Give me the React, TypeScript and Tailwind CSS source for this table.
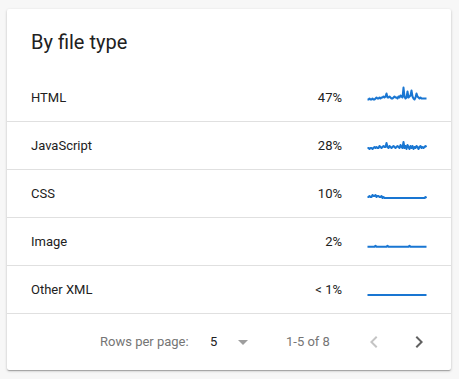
import * as React from "react";

type Row = { label: string; pct: string; base: number; pts: number[] };

// heights above baseline, one per px step across a 60px wide sparkline
const html = [0,0,1,0,0,1,0,0,1,2,1,1,2,1,2,2,3,2,3,6,2,2,3,2,1,1,2,3,2,2,1,3,2,4,3,2,12,3,1,2,8,2,3,4,9,3,1,0,2,6,3,2,1,2,1,1,1,1,1,1];
const js = [1,1,0,1,1,0,1,2,1,2,1,1,3,2,1,2,3,2,2,6,2,1,3,2,1,2,3,2,1,2,3,2,1,4,2,1,7,1,3,0,4,2,0,3,1,3,0,2,1,3,2,0,2,3,1,2,1,2,3,2];
const css = [1,1,2,1,1,3,2,2,3,1,2,2,1,1,2,0,1,0,0,0,0,0,0,0,0,0,0,0,0,0,0,0,0,0,0,0,0,0,0,0,0,0,0,0,0,0,0,0,0,0,0,0,0,0,0,0,0,0,1,0];
const img = [0,0,0,0,0,0,0,0,1,0,0,0,0,0,0,0,0,0,0,0,1,0,0,0,0,0,0,0,0,0,0,0,0,0,0,0,0,0,0,0,0,0,1,0,0,0,0,0,0,0,0,0,0,0,0,0,0,0,0,0];
const xml = new Array(60).fill(0);

const rows: Row[] = [
  { label: "HTML", pct: "47%", base: 13.5, pts: html },
  { label: "JavaScript", pct: "28%", base: 15, pts: js },
  { label: "CSS", pct: "10%", base: 16, pts: css },
  { label: "Image", pct: "2%", base: 16.7, pts: img },
  { label: "Other XML", pct: "< 1%", base: 17, pts: xml },
];

function Spark({ pts, base }: { pts: number[]; base: number }) {
  const d = pts.map((v, i) => `${i + 0.5},${(base - v).toFixed(1)}`).join(" ");
  return (
    <svg width="60" height="24" viewBox="0 0 60 24" className="shrink-0">
      <polyline points={d} fill="none" stroke="#1976d2" strokeWidth="2" strokeLinejoin="round" />
    </svg>
  );
}

export default function App() {
  return (
    <div className="min-h-[379px] bg-[#f7f7f7] pt-[9px] px-[7px] font-['Roboto',sans-serif]">
      <div className="w-[444px] bg-white rounded-[2px] shadow-[0_1px_3px_rgba(0,0,0,0.2),0_1px_1px_rgba(0,0,0,0.14),0_2px_1px_-1px_rgba(0,0,0,0.12)]">
        <div className="h-[65px] flex items-center px-6 text-[20px] text-[#212121]">By file type</div>
        {rows.map((r) => (
          <div key={r.label} className="h-12 flex items-center px-6 border-b border-[#e0e0e0] text-[13px] text-[#212121]">
            <span className="flex-1">{r.label}</span>
            <span className="mr-[25px]">{r.pct}</span>
            <Spark pts={r.pts} base={r.base} />
          </div>
        ))}
        <div className="h-14 flex items-center text-[13px] text-[#757575]">
          <span className="ml-[93px] w-[110px]">Rows per page:</span>
          <span className="w-[21px] text-[#212121]">5</span>
          <svg width="24" height="24" viewBox="0 0 24 24" className="shrink-0">
            <path d="M7 10l5 5 5-5z" fill="#9e9e9e" />
          </svg>
          <span className="ml-[31px] w-[76px]">1-5 of 8</span>
          <svg width="24" height="24" viewBox="0 0 24 24" className="shrink-0">
            <path d="M15.41 7.41L14 6l-6 6 6 6 1.41-1.41L10.83 12z" fill="#c4c4c4" />
          </svg>
          <svg width="24" height="24" viewBox="0 0 24 24" className="shrink-0 ml-[21px]">
            <path d="M10 6L8.59 7.41 13.17 12l-4.58 4.59L10 18l6-6z" fill="#616161" />
          </svg>
        </div>
      </div>
    </div>
  );
}
